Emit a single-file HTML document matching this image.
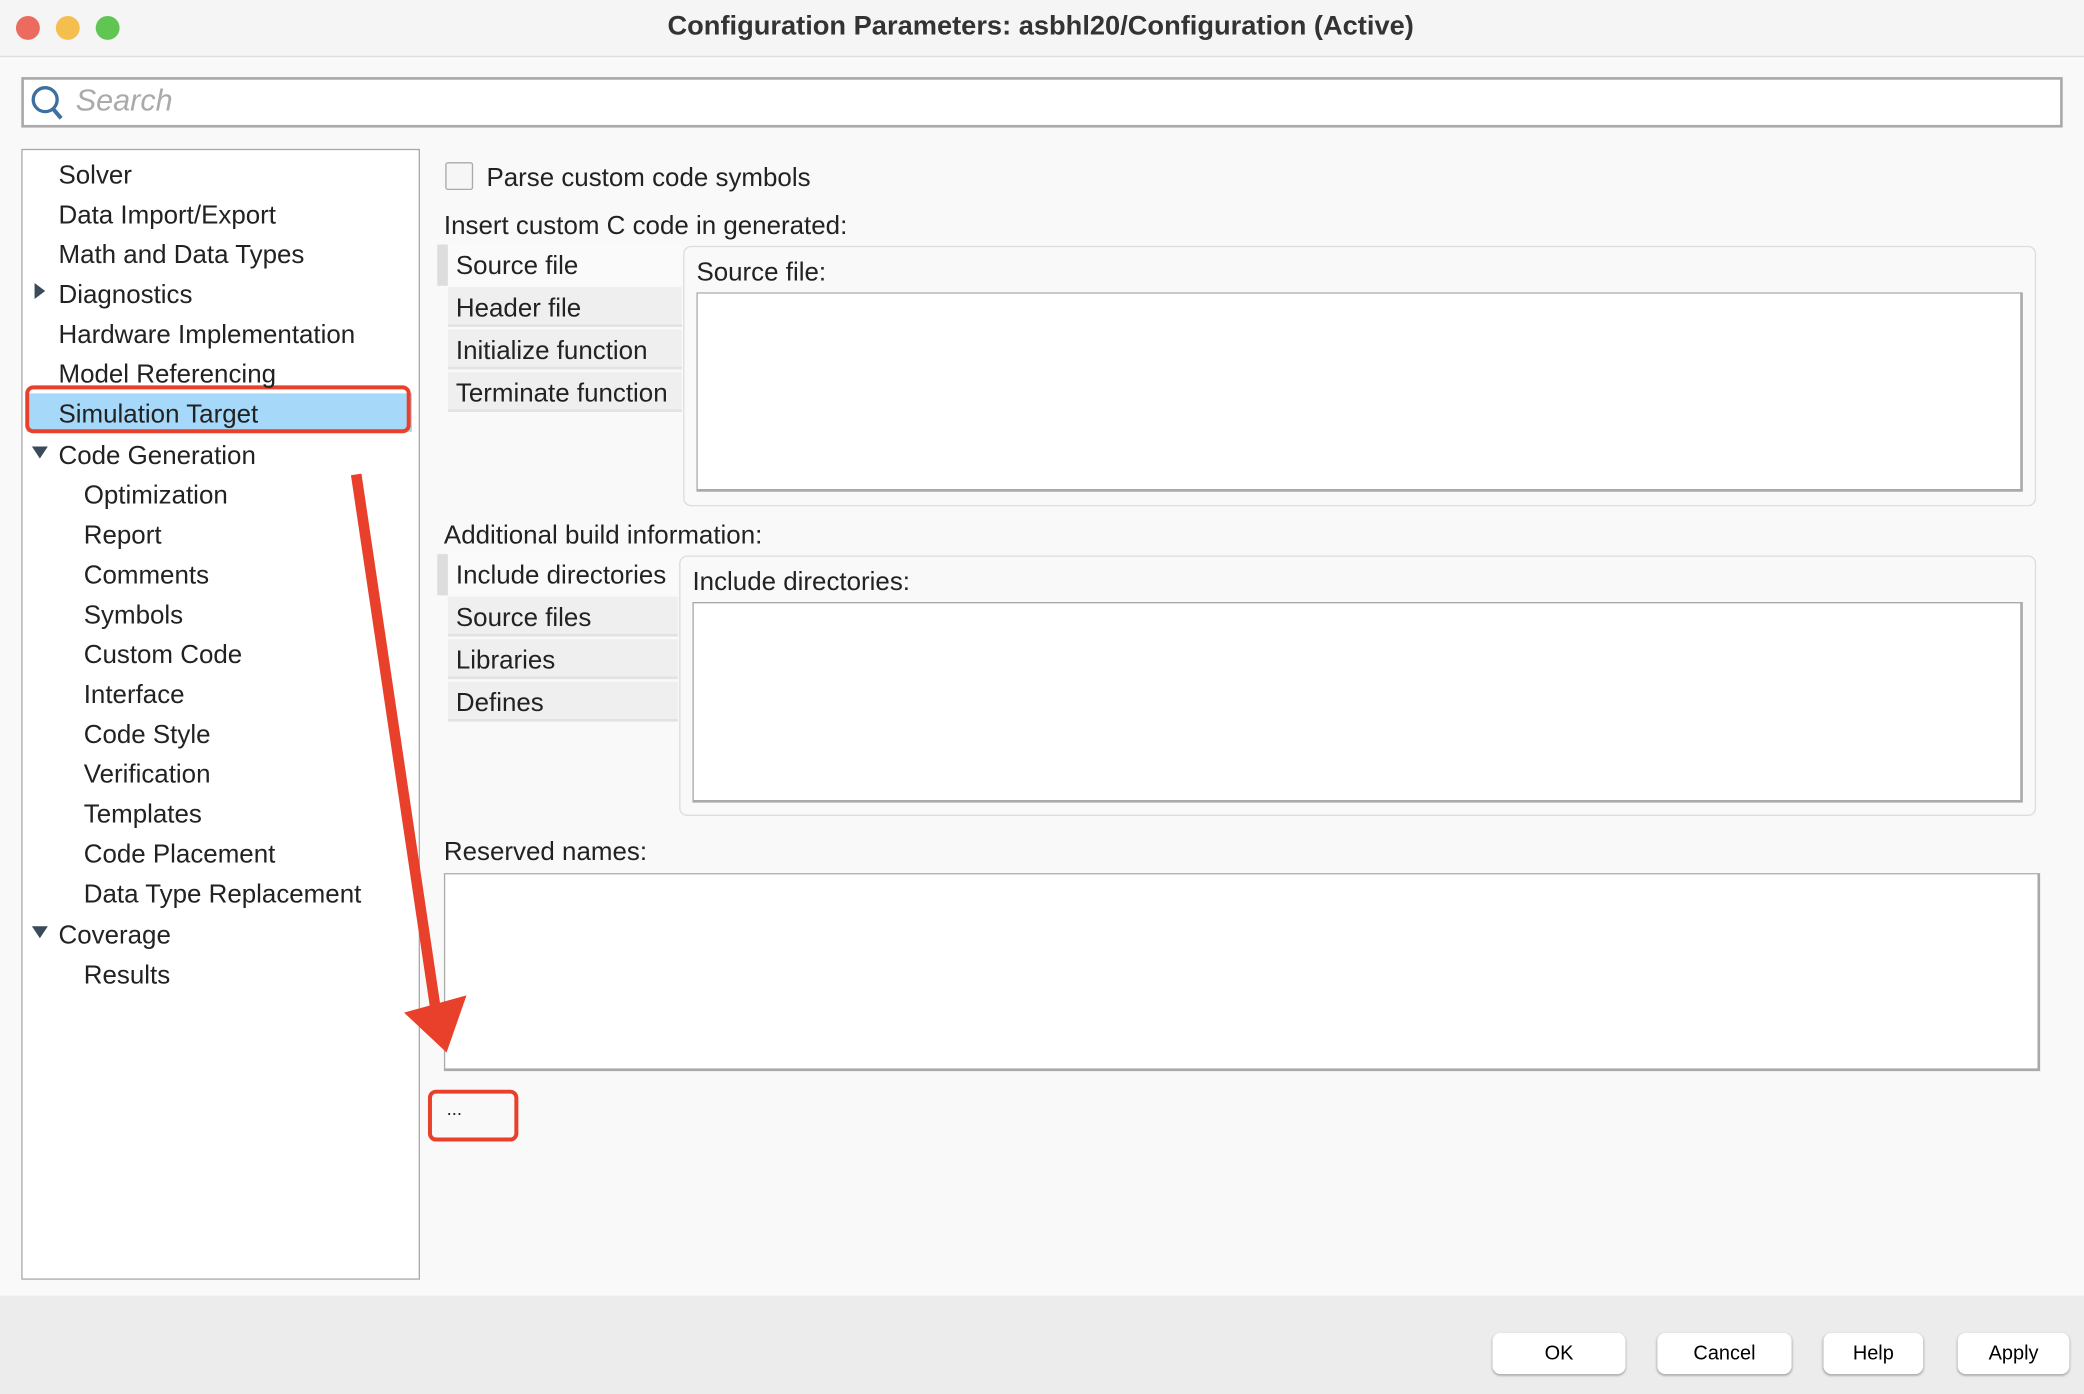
<!DOCTYPE html>
<html><head><meta charset="utf-8"><style>
html,body{margin:0;padding:0;width:2084px;height:1394px;overflow:hidden;background:#f9f9f9}
#w{position:absolute;left:0;top:0;width:1568px;height:1049px;transform:scale(1.32908,1.3289);transform-origin:0 0;font-family:"Liberation Sans",sans-serif;color:#222;background:#f9f9f9}
.a{position:absolute}
.t{position:absolute;font-size:19.5px;white-space:nowrap;line-height:22px}
.tab{position:absolute;left:337px;width:176px;height:30px;background:#efefef;border-bottom:2px solid #e2e2e2;font-size:19.5px;line-height:32px;padding-left:6px;box-sizing:border-box}
.btn{position:absolute;top:1003px;height:31px;background:#fff;border-radius:6px;box-shadow:0 1px 2px rgba(0,0,0,.35);font-size:15px;text-align:center;line-height:31px;color:#000}
</style></head><body><div id="w">
<div class="a" style="left:0;top:0;width:1568px;height:42px;background:#f5f5f5;border-bottom:1px solid #ddd"></div>
<div class="a" style="left:12px;top:12px;width:18px;height:18px;border-radius:50%;background:#ec6a5e"></div>
<div class="a" style="left:42px;top:12px;width:18px;height:18px;border-radius:50%;background:#f4bf4f"></div>
<div class="a" style="left:72px;top:12px;width:18px;height:18px;border-radius:50%;background:#61c554"></div>
<div class="a" style="left:0;top:8px;width:1566px;text-align:center;font-size:20.5px;font-weight:bold;color:#333">Configuration Parameters: asbhl20/Configuration (Active)</div>
<div class="a" style="left:0;top:975px;width:1568px;height:74px;background:#ececec"></div>
<div class="a" style="left:16px;top:58px;width:1532px;height:34px;border:2px solid #aaa;background:#fff"></div>
<svg class="a" style="left:22px;top:62px" width="28" height="30"><circle cx="12" cy="13" r="9" fill="none" stroke="#3d6fa0" stroke-width="2.5"/><line x1="18" y1="20" x2="24" y2="27" stroke="#3d6fa0" stroke-width="3"/></svg>
<div class="a" style="left:57px;top:62px;font-size:23px;font-style:italic;color:#aaa">Search</div>
<div class="a" style="left:16px;top:112px;width:298px;height:849px;border:1px solid #aaa;background:#fff"></div>
<div class="a" style="left:20px;top:296px;width:290px;height:29px;background:#a6d8fa"></div>
<div class="a" style="left:19px;top:290px;width:284px;height:30px;border:3px solid #e8402a;border-radius:6px"></div>
<div class="t" style="left:44px;top:121px">Solver</div>
<div class="t" style="left:44px;top:151px">Data Import/Export</div>
<div class="t" style="left:44px;top:181px">Math and Data Types</div>
<div class="t" style="left:44px;top:211px">Diagnostics</div>
<div class="t" style="left:44px;top:241px">Hardware Implementation</div>
<div class="t" style="left:44px;top:271px">Model Referencing</div>
<div class="t" style="left:44px;top:301px">Simulation Target</div>
<div class="t" style="left:44px;top:332px">Code Generation</div>
<div class="t" style="left:63px;top:362px">Optimization</div>
<div class="t" style="left:63px;top:392px">Report</div>
<div class="t" style="left:63px;top:422px">Comments</div>
<div class="t" style="left:63px;top:452px">Symbols</div>
<div class="t" style="left:63px;top:482px">Custom Code</div>
<div class="t" style="left:63px;top:512px">Interface</div>
<div class="t" style="left:63px;top:542px">Code Style</div>
<div class="t" style="left:63px;top:572px">Verification</div>
<div class="t" style="left:63px;top:602px">Templates</div>
<div class="t" style="left:63px;top:632px">Code Placement</div>
<div class="t" style="left:63px;top:662px">Data Type Replacement</div>
<div class="t" style="left:44px;top:693px">Coverage</div>
<div class="t" style="left:63px;top:723px">Results</div>
<svg class="a" style="left:24px;top:212px" width="12" height="14"><polygon points="2,1 10,7 2,13" fill="#3b4a5a"/></svg>
<svg class="a" style="left:23px;top:334px" width="14" height="12"><polygon points="1,2 13,2 7,11" fill="#3b4a5a"/></svg>
<svg class="a" style="left:23px;top:695px" width="14" height="12"><polygon points="1,2 13,2 7,11" fill="#3b4a5a"/></svg>
<div class="a" style="left:335px;top:122px;width:19px;height:19px;border:1px solid #aaa;background:#f6f6f6;border-radius:2px"></div>
<div class="t" style="left:366px;top:123px">Parse custom code symbols</div>
<div class="t" style="left:334px;top:159px">Insert custom C code in generated:</div>
<div class="a" style="left:514px;top:185px;width:1016px;height:194px;border:1px solid #ddd;border-radius:6px;background:#f9f9f9"></div>
<div class="a" style="left:329px;top:184px;width:8px;height:31px;background:#ddd"></div>
<div class="tab" style="top:184px;background:#fafafa;border:0">Source file</div>
<div class="tab" style="top:216px">Header file</div>
<div class="tab" style="top:248px">Initialize function</div>
<div class="tab" style="top:280px">Terminate function</div>
<div class="t" style="left:524px;top:194px">Source file:</div>
<div class="a" style="left:524px;top:220px;width:995px;height:147px;border:2px solid #aaa;border-width:1px 2px 2px 1px;background:#fff"></div>
<div class="t" style="left:334px;top:392px">Additional build information:</div>
<div class="a" style="left:511px;top:418px;width:1019px;height:194px;border:1px solid #ddd;border-radius:6px;background:#f9f9f9"></div>
<div class="a" style="left:329px;top:417px;width:8px;height:31px;background:#ddd"></div>
<div class="tab" style="top:417px;width:173px;background:#fafafa;border:0">Include directories</div>
<div class="tab" style="top:449px;width:173px">Source files</div>
<div class="tab" style="top:481px;width:173px">Libraries</div>
<div class="tab" style="top:513px;width:173px">Defines</div>
<div class="t" style="left:521px;top:427px">Include directories:</div>
<div class="a" style="left:521px;top:453px;width:998px;height:148px;border:2px solid #aaa;border-width:1px 2px 2px 1px;background:#fff"></div>
<div class="t" style="left:334px;top:630px">Reserved names:</div>
<div class="a" style="left:334px;top:657px;width:1198px;height:146px;border:2px solid #aaa;border-width:1px 2px 2px 1px;background:#fff"></div>
<div class="a" style="left:322px;top:820px;width:62px;height:33px;border:3px solid #e8402a;border-radius:6px"></div>
<div class="a" style="left:336px;top:826px;font-size:14px">...</div>
<svg class="a" style="left:0;top:0" width="1568" height="1049"><path d="M268,357 L329,768" stroke="#e8402a" stroke-width="8" fill="none"/><polygon points="304,762 351,749 336,792" fill="#e8402a"/></svg>
<div class="btn" style="left:1123px;width:100px">OK</div>
<div class="btn" style="left:1247px;width:101px">Cancel</div>
<div class="btn" style="left:1372px;width:75px">Help</div>
<div class="btn" style="left:1473px;width:84px">Apply</div>
</div></body></html>
